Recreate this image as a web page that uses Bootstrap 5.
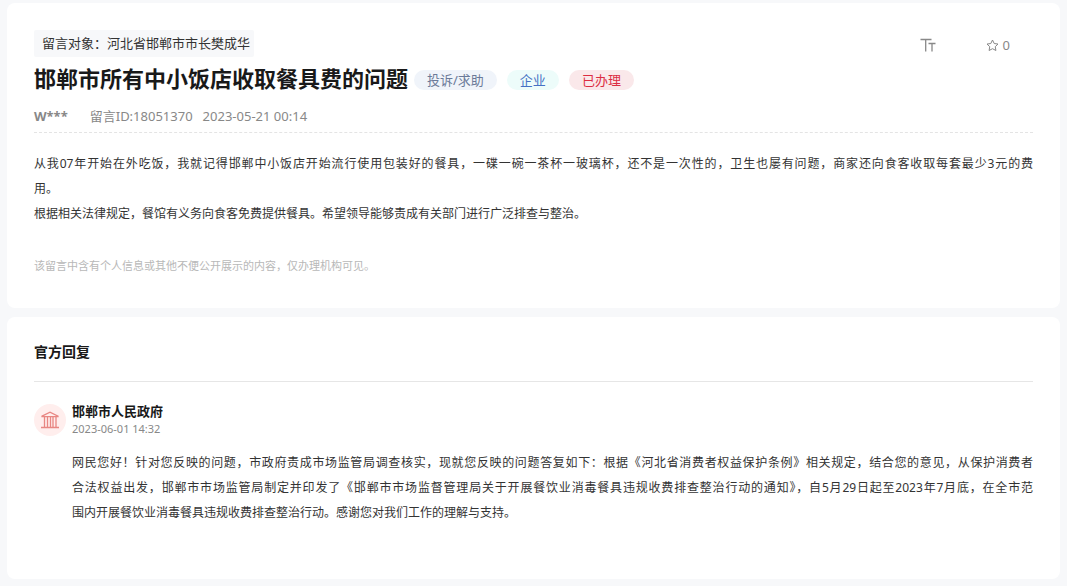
<!DOCTYPE html>
<html lang="zh-CN">
<head>
<meta charset="utf-8">
<meta name="viewport" content="width=device-width, initial-scale=1">
<title>邯郸市所有中小饭店收取餐具费的问题</title>
<link href="https://cdn.jsdelivr.net/npm/bootstrap@5.3.0/dist/css/bootstrap.min.css" rel="stylesheet">
<style>
  body { background: #f7f8fa; color: #333; font-family: "Noto Sans", "Noto Sans CJK SC", sans-serif; font-size: 13px; line-height: 20px; }
  .page { padding: 3px 7px 7px; gap: 9px; }
  .panel { border: 0; border-radius: 8px; padding: 27px; }
  .target { background: #f7f8fa; border-radius: 2px; padding: 3px 4px 4px 8px; }
  .title-row { margin-top: 6px; }
  .title { color: #191919; font-size: 22px; line-height: 30px; font-weight: 700; }
  .tags { gap: 10px; padding: 4px 0 0 6px; }
  .tag { border-radius: 10px; padding: 0 13px; }
  .tag-type { background: #f0f4fa; color: #6b7a99; }
  .tag-field { background: #edfcfa; color: #4571c4; }
  .tag-done { background: #fae8ea; color: #dc2d42; }
  .meta { color: #888; border-bottom: 1px dashed #e4e4e4; padding: 13px 0 6px; }
  .meta-name { margin-right: 22px; }
  .meta-id { margin-right: 10px; }
  .tools { gap: 50px; padding: 5px 23px 0 0; }
  .tool { border: 0; background: none; padding: 0; color: #888; gap: 4px; }
  .copy { font-size: 12px; line-height: 25px; }
  .full-line { text-align: justify; text-align-last: justify; }
  .message { padding-top: 18px; }
  .notice { color: #b8b8b8; font-size: 11px; margin-top: 30px; padding-bottom: 5px; }
  .reply-title { color: #191919; font-size: 14px; font-weight: 700; border-bottom: 1px solid #e6e6e6; padding: 0 0 21px; line-height: 16px; }
  .reply { gap: 6px; margin-top: 20px; padding-bottom: 27px; }
  .avatar { width: 32px; height: 32px; margin-top: 2px; background: #ffeeed; }
  .office { color: #191919; font-size: 13px; line-height: 18px; font-weight: 700; }
  .reply-time { color: #888; font-size: 11px; line-height: 18px; }
  .reply-copy { margin-top: 12px; }
</style>
<script src="https://cdn.jsdelivr.net/npm/bootstrap@5.3.0/dist/js/bootstrap.bundle.min.js"></script>
</head>
<body>
<main class="page d-flex flex-column">
  <article class="card panel">
    <div class="d-flex justify-content-between align-items-start">
      <div class="target">留言对象：河北省邯郸市市长樊成华</div>
      <div class="tools d-flex">
        <button type="button" class="tool d-flex align-items-center" aria-label="字号">
          <svg width="16" height="14" viewBox="0 0 16 14" fill="none" stroke="currentColor" stroke-width="1.3"><path d="M.5 1.5h11M5.700 1.500v12M8.500 5.500h7M12 5.500v8"/></svg>
        </button>
        <button type="button" class="tool d-flex align-items-center" aria-label="收藏 0">
          <svg width="13" height="13" viewBox="0 0 13 13" fill="none" stroke="currentColor" stroke-linejoin="round"><path d="m6.500 1 1.700 3.500 3.800.55-2.750 2.650.65 3.800-3.400-1.800-3.400 1.800.65-3.800L1 5.050l3.800-.55Z"/></svg>
          <span>0</span>
        </button>
      </div>
    </div>
    <div class="title-row d-flex align-items-center flex-wrap">
      <h1 class="title m-0">邯郸市所有中小饭店收取餐具费的问题</h1>
      <div class="tags d-flex">
        <span class="tag tag-type">投诉/求助</span>
        <span class="tag tag-field">企业</span>
        <span class="tag tag-done">已办理</span>
      </div>
    </div>
    <div class="meta d-flex">
      <strong class="meta-name">W***</strong>
      <span class="meta-id">留言ID:18051370</span>
      <time datetime="2023-05-21T00:14">2023-05-21 00:14</time>
    </div>
    <div class="message copy">
      <p class="m-0"><span class="d-block full-line">从我07年开始在外吃饭，我就记得邯郸中小饭店开始流行使用包装好的餐具，一碟一碗一茶杯一玻璃杯，还不是一次性的，卫生也屡有问题，商家还向食客收取每套最少3元的费</span>用。</p>
      <p class="m-0">根据相关法律规定，餐馆有义务向食客免费提供餐具。希望领导能够责成有关部门进行广泛排查与整治。</p>
    </div>
    <p class="notice mb-0">该留言中含有个人信息或其他不便公开展示的内容，仅办理机构可见。</p>
  </article>

  <section class="card panel">
    <h2 class="reply-title m-0">官方回复</h2>
    <div class="reply d-flex align-items-start">
      <div class="avatar rounded-circle d-flex align-items-center justify-content-center flex-shrink-0">
        <svg width="18" height="18" viewBox="0 0 18 18" fill="none" stroke="#e88783" stroke-width="1.300"><path d="M1 5.200 9 1.200l8 4v.500H1ZM0 16.500h18M3.500 6v10.500M6.500 6v10.500M9.500 6v10.500M12 6v10.500M15 6v10.500"/></svg>
      </div>
      <div class="flex-grow-1">
        <h3 class="office m-0">邯郸市人民政府</h3>
        <time class="reply-time d-block" datetime="2023-06-01T14:32">2023-06-01 14:32</time>
        <p class="reply-copy copy mb-0"><span class="d-block full-line">网民您好！针对您反映的问题，市政府责成市场监管局调查核实，现就您反映的问题答复如下：根据《河北省消费者权益保护条例》相关规定，结合您的意见，从保护消费者</span><span class="d-block full-line">合法权益出发，邯郸市市场监管局制定并印发了《邯郸市市场监督管理局关于开展餐饮业消毒餐具违规收费排查整治行动的通知》，自5月29日起至2023年7月底，在全市范</span>围内开展餐饮业消毒餐具违规收费排查整治行动。感谢您对我们工作的理解与支持。</p>
      </div>
    </div>
  </section>
</main>
</body>
</html>
